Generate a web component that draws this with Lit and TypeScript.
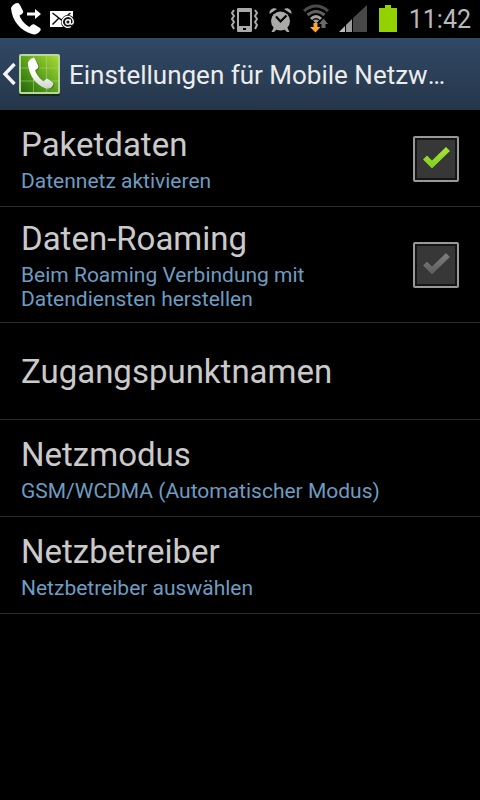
import { LitElement, html, css, svg, nothing } from "lit";
import { customElement, property, state } from "lit/decorators.js";

interface Entry {
  id: string;
  title: string;
  summary?: string;
  toggle?: boolean;
}

const ENTRIES: Entry[] = [
  { id: "data", title: "Paketdaten", summary: "Datennetz aktivieren", toggle: true },
  {
    id: "roaming",
    title: "Daten-Roaming",
    summary: "Beim Roaming Verbindung mit Datendiensten herstellen",
    toggle: true,
  },
  { id: "apn", title: "Zugangspunktnamen" },
  { id: "mode", title: "Netzmodus", summary: "GSM/WCDMA (Automatischer Modus)" },
  { id: "operator", title: "Netzbetreiber", summary: "Netzbetreiber auswählen" },
];

const HANDSET = svg`<path d="M1 5 C2 2 5 0 8 0 C9 0 9 1 10 2 L13 8 C13.500 9 13 10 12 11 L9.500 12.500 C11 17 15 21.500 19.500 24 L21.500 22 C22.500 21 23.500 21 24.500 21.500 L30 25 C31 26 31 27 30 28 C28 31 25 32 22 31 C11 28 2 18 1 5Z"/>`;

@customElement("status-bar")
class StatusBar extends LitElement {
  static styles = css`
    :host {
      display: flex;
      align-items: center;
      justify-content: space-between;
      height: 38px;
      padding: 0 9px 0 10px;
      background: #000;
    }
    .group {
      display: flex;
      align-items: center;
    }
    .left {
      gap: 8px;
    }
    .right {
      gap: 10px;
    }
    svg {
      display: block;
      flex: none;
    }
    .clock {
      font-size: 25px;
      line-height: 36px;
      padding-top: 2px;
      color: #b9b9b9;
    }
  `;

  render() {
    return html`
      <div class="group left">
        <svg width="32" height="38" viewBox="0 0 32 38" fill="#fff" aria-label="Rufumleitung" role="img">
          <g transform="translate(0 3)">${HANDSET}</g>
          <path d="M17 12.500h8V9l6 5-6 5v-3.500h-8z" />
        </svg>
        <svg width="26" height="38" viewBox="0 0 26 38" aria-label="E-Mail" role="img">
          <path fill="#fff" d="M0 11h23v16H0z" />
          <path d="M2.500 13l9 7 9-7M2.500 24.500l6-6" fill="none" stroke="#111" stroke-width="1.500" />
          <circle cx="18" cy="22" r="7" fill="#111" />
          <circle cx="18" cy="22" r="2.300" fill="none" stroke="#fff" stroke-width="1.400" />
          <path d="M20.300 19.500v3.500c0 2 3 1.500 3-1.500a5.500 5.500 0 1 0-2.500 5" fill="none" stroke="#fff" stroke-width="1.400" />
        </svg>
      </div>
      <div class="group right">
        <svg width="29" height="38" viewBox="0 0 29 38" aria-label="Vibration" role="img">
          <path fill="#aaaba8" fill-rule="evenodd" d="M8 8h13q1 0 1 1v22q0 1-1 1H8q-1 0-1-1V9q0-1 1-1zM9 12v14h11V12zM13 28v2h3v-2z" />
          <path d="M4 10l-2 3 2 3-2 3 2 3-2 3 2 4M25 10l2 3-2 3 2 3-2 3 2 3-2 4" fill="none" stroke="#aaaba8" stroke-width="2" />
        </svg>
        <svg width="23" height="38" viewBox="0 0 23 38" aria-label="Wecker" role="img">
          <g fill="#aaaba8">
            <circle cx="11.500" cy="21" r="9.500" />
            <path d="M0.500 14C0 10 4 7 8 9zM22.500 14C23 10 19 7 15 9zM5 27l3 2-3 3H2.500zM18 27l-3 2 3 3h2.500z" />
          </g>
          <path d="M7 16.500l4.500 5 6-6" fill="none" stroke="#000" stroke-width="2.200" />
        </svg>
        <svg width="27" height="38" viewBox="0 0 27 38" aria-label="WLAN" role="img">
          <g transform="translate(1 0)">
            <g fill="none" stroke-width="3">
              <path d="M1 11Q13 1 25 11" stroke="#4b4b4b" />
              <path d="M4.500 15Q13 8 21.500 15" stroke="#606060" />
              <path d="M8 19Q13 14 18 19" stroke="#a2a2a2" />
            </g>
            <path d="M10 20.500q3-2 6 0l-3 3z" fill="#a2a2a2" />
            <path d="M10.500 23h4v4h3L12.500 32.500 7 27h3.500z" fill="#ffa42b" />
            <path d="M18.500 28v-4h-2.500l4.500-5.500 4.500 5.500h-2.500v4z" fill="#6a6a6a" />
          </g>
        </svg>
        <svg width="28" height="38" viewBox="0 0 28 38" aria-label="Signalstärke" role="img">
          <path d="M0 32L6 26v6z" fill="#bdbdbd" />
          <path d="M7 32v-7l6-6v13z" fill="#9b9b9b" />
          <path d="M14 32V18L28 5v27z" fill="#484848" />
        </svg>
        <svg width="22" height="38" viewBox="0 0 22 38" aria-label="Akku" role="img">
          <path d="M2 8h6V5h6v3h6v24H2z" fill="#93d200" />
        </svg>
        <span class="clock">11:42</span>
      </div>
    `;
  }
}

@customElement("action-bar")
class ActionBar extends LitElement {
  @property() heading = "";

  static styles = css`
    :host {
      display: flex;
      align-items: center;
      box-sizing: border-box;
      height: 72px;
      padding: 2px 24px 0 0;
      background: linear-gradient(#30486a 0%, #2f4661 15%, #25364a 100%);
    }
    .up {
      display: flex;
      align-items: center;
      gap: 3px;
      padding: 0 8px 0 2px;
      height: 70px;
      border: 0;
      background: none;
      flex: none;
      cursor: pointer;
    }
    svg {
      display: block;
    }
    h1 {
      flex: 1;
      min-width: 0;
      margin: 0;
      font-size: 26px;
      line-height: 36px;
      font-weight: 400;
      color: #ececec;
      white-space: nowrap;
      overflow: hidden;
      text-overflow: ellipsis;
    }
  `;

  render() {
    return html`
      <button class="up" aria-label="Zurück">
        <svg width="14" height="26" viewBox="0 0 14 26">
          <path d="M12.500 2L3 12l9.500 10" fill="none" stroke="#f4f6f8" stroke-width="3.400" />
        </svg>
        <svg width="42" height="44" viewBox="0 0 42 44">
          <defs>
            <linearGradient id="leaf" x1="1" y1="0" x2="0" y2="1">
              <stop offset="0" stop-color="#a9db35" />
              <stop offset="0.500" stop-color="#5da41c" />
              <stop offset="1" stop-color="#24690a" />
            </linearGradient>
            <linearGradient id="shell" x1="0" y1="0" x2="0" y2="1">
              <stop offset="0.500" stop-color="#ffffff" />
              <stop offset="1" stop-color="#cfcfcf" />
            </linearGradient>
          </defs>
          <rect x="0" y="3" width="41" height="40" rx="2" fill="#18251b" />
          <rect x="0" y="1" width="41" height="40" rx="2" fill="#b9d79c" />
          <rect x="2" y="3" width="37" height="36" fill="url(#leaf)" />
          <path d="M14.500 3v36M27.500 3v36M2 15h37M2 28h37" stroke="#a9d878" stroke-opacity="0.550" />
          <g transform="translate(9 6) scale(0.860 0.960)" fill="#1d4d0a" opacity="0.500">${HANDSET}</g>
          <g transform="translate(8 5) scale(0.860 0.980)" fill="url(#shell)">${HANDSET}</g>
        </svg>
      </button>
      <h1>${this.heading}</h1>
    `;
  }
}

@customElement("app-root")
class AppRoot extends LitElement {
  @state() private enabled: Record<string, boolean> = { data: true, roaming: false };

  static styles = css`
    :host {
      display: block;
      min-height: 100vh;
      background: #000;
      font-family: Roboto, "Noto Sans", sans-serif;
    }
    ul {
      list-style: none;
      margin: 0;
      padding: 0;
    }
    li {
      border-bottom: 1px solid #2b2b2b;
    }
    .row {
      display: flex;
      align-items: center;
      gap: 21px;
      box-sizing: border-box;
      width: 100%;
      min-height: 96px;
      padding: 12px 21px 11px;
      border: 0;
      background: none;
      font-family: inherit;
      text-align: left;
      cursor: pointer;
    }
    .text {
      display: flex;
      flex-direction: column;
      gap: 4px;
      flex: 1;
      min-width: 0;
    }
    .title {
      font-size: 33px;
      line-height: 40px;
      color: #cacaca;
    }
    .summary {
      font-size: 21px;
      line-height: 24px;
      color: #6c9dc2;
    }
    .check {
      display: grid;
      flex: none;
    }
    .check > * {
      grid-area: 1 / 1;
    }
    input {
      appearance: none;
      box-sizing: border-box;
      width: 46px;
      height: 46px;
      margin: 0;
      border: 2px solid #999;
      border-radius: 2px;
      background: #373737;
      box-shadow: inset 0 0 0 2px #151515;
      cursor: pointer;
    }
    .mark {
      pointer-events: none;
    }
  `;

  private toggle(id: string, event: Event) {
    this.enabled = { ...this.enabled, [id]: (event.target as HTMLInputElement).checked };
  }

  private renderMark(id: string, on: boolean) {
    return html`
      <svg class="mark" width="46" height="46" viewBox="0 0 46 46" aria-hidden="true">
        <defs>
          <linearGradient id="tick-${id}" x1="0" y1="0" x2="0" y2="1">
            <stop offset="0" stop-color=${on ? "#a8e43c" : "#808080"} />
            <stop offset="1" stop-color=${on ? "#7dcf17" : "#5c5c5c"} />
          </linearGradient>
        </defs>
        <path d="M10 23.500l4-4 5 5 14-13.500 4 4L19 32.500z" fill="url(#tick-${id})" stroke="#262626" stroke-opacity="0.600" stroke-width="1" paint-order="stroke" />
      </svg>
    `;
  }

  private renderText(entry: Entry) {
    return html`
      <span class="text">
        <span class="title">${entry.title}</span>
        ${entry.summary ? html`<span class="summary">${entry.summary}</span>` : nothing}
      </span>
    `;
  }

  private renderEntry(entry: Entry) {
    if (!entry.toggle) {
      return html`<li><button class="row">${this.renderText(entry)}</button></li>`;
    }
    const on = this.enabled[entry.id];
    return html`
      <li>
        <label class="row" for=${entry.id}>
          ${this.renderText(entry)}
          <span class="check">
            <input type="checkbox" id=${entry.id} .checked=${on} @change=${(e: Event) => this.toggle(entry.id, e)} />
            ${this.renderMark(entry.id, on)}
          </span>
        </label>
      </li>
    `;
  }

  render() {
    return html`
      <status-bar></status-bar>
      <action-bar heading="Einstellungen für Mobile Netzwerke"></action-bar>
      <main>
        <ul>
          ${ENTRIES.map((entry) => this.renderEntry(entry))}
        </ul>
      </main>
    `;
  }
}
